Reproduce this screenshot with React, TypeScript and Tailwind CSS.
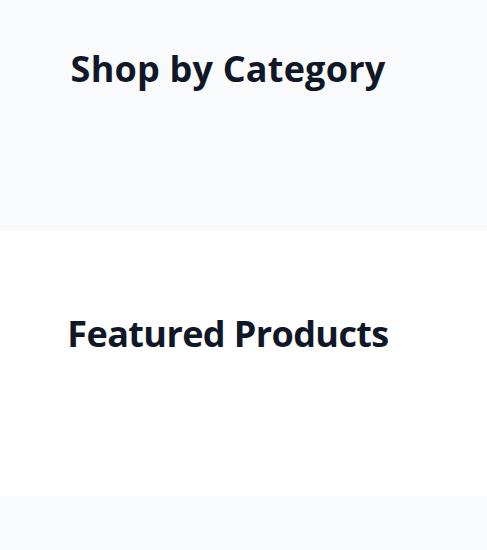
export default function App() {
  return (
    <div className="w-full" style={{ fontFamily: '"Open Sans", "Noto Sans", sans-serif' }}>
      <section className="bg-gray-50 h-[231px] pt-[49px]">
        <h2 className="text-center pr-[31px] text-[36px] leading-[40px] font-bold text-gray-900 tracking-[0.2px]">
          Shop by Category
        </h2>
      </section>
      <section className="bg-white h-[265px] pt-[83px]">
        <h2 className="text-center pr-[31px] text-[36px] leading-[40px] font-bold text-gray-900 tracking-[-0.6px]">
          Featured Products
        </h2>
      </section>
      <section className="bg-gray-50 h-[54px]" />
    </div>
  );
}
